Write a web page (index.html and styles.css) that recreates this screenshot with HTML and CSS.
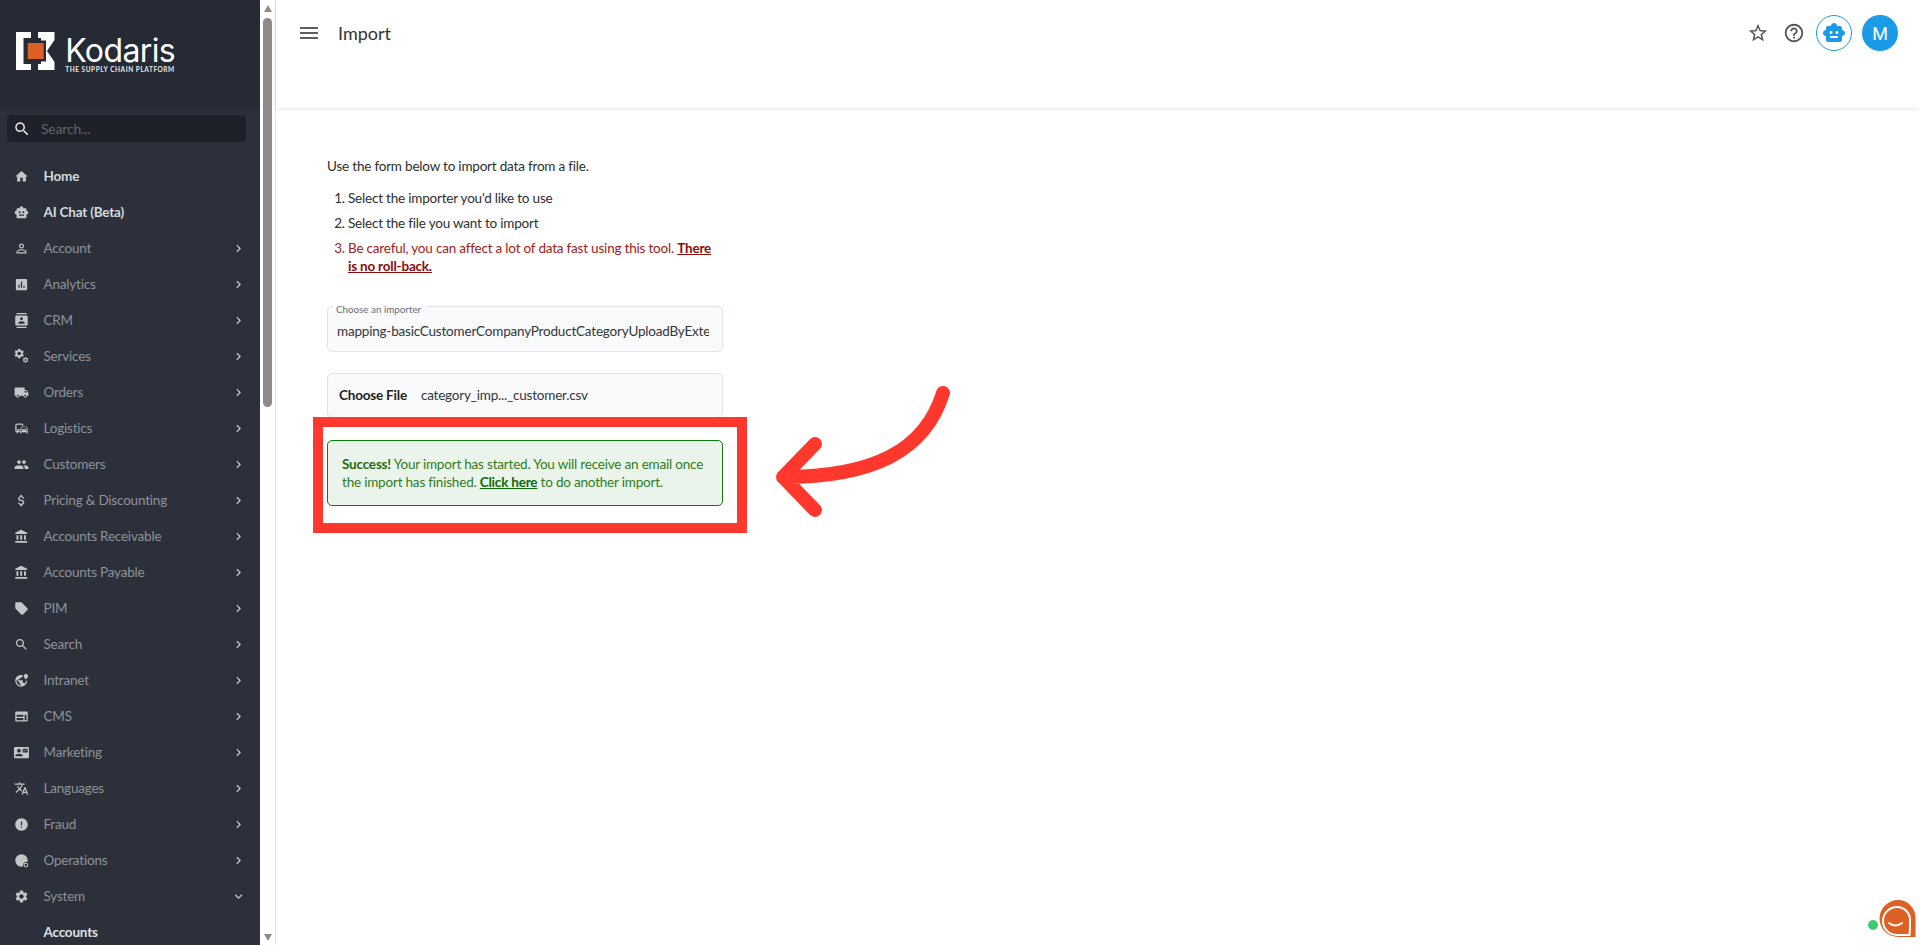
FILE: index.html
```html
<!DOCTYPE html>
<html lang="en">
<head>
<meta charset="utf-8">
<title>Import</title>
<link rel="stylesheet" href="styles.css">
</head>
<body>
<svg class="sprite" xmlns="http://www.w3.org/2000/svg">
<symbol id="i-home" viewBox="0 0 24 24"><path d="M10 20v-6h4v6h5v-8h3L12 3 2 12h3v8z"/></symbol>
<symbol id="i-bot" viewBox="0 0 24 24"><path d="M20 9V7c0-1.1-.9-2-2-2h-3c0-1.66-1.34-3-3-3S9 3.34 9 5H6c-1.1 0-2 .9-2 2v2c-1.66 0-3 1.34-3 3s1.34 3 3 3v4c0 1.1.9 2 2 2h12c1.1 0 2-.9 2-2v-4c1.66 0 3-1.34 3-3s-1.34-3-3-3zM7.5 11.5c0-.83.67-1.5 1.5-1.5s1.5.67 1.5 1.5S9.83 13 9 13s-1.5-.67-1.5-1.5zM16 17H8v-2h8v2zm-1-4c-.83 0-1.5-.67-1.5-1.5S14.17 10 15 10s1.5.67 1.5 1.5S15.83 13 15 13z"/></symbol>
<symbol id="i-person" viewBox="0 0 24 24"><path d="M12 5.9c1.16 0 2.1.94 2.1 2.1s-.94 2.1-2.1 2.1S9.9 9.16 9.9 8s.94-2.1 2.1-2.1m0 9c2.97 0 6.1 1.46 6.1 2.1v1.1H5.9V17c0-.64 3.13-2.1 6.1-2.1M12 4C9.79 4 8 5.79 8 8s1.79 4 4 4 4-1.79 4-4-1.79-4-4-4zm0 9c-2.67 0-8 1.34-8 4v3h16v-3c0-2.66-5.33-4-8-4z"/></symbol>
<symbol id="i-analytics" viewBox="0 0 24 24"><path d="M19 3H5c-1.1 0-2 .9-2 2v14c0 1.1.9 2 2 2h14c1.1 0 2-.9 2-2V5c0-1.1-.9-2-2-2zM9 17H7v-5h2v5zm4 0h-2V7h2v10zm4 0h-2v-3h2v3z"/></symbol>
<symbol id="i-contacts" viewBox="0 0 24 24"><path d="M20 0H4v2h16V0zM4 24h16v-2H4v2zM20 4H4c-1.1 0-2 .9-2 2v12c0 1.1.9 2 2 2h16c1.1 0 2-.9 2-2V6c0-1.1-.9-2-2-2zm-8 2.75c1.24 0 2.25 1.01 2.25 2.25s-1.01 2.25-2.25 2.25S9.75 10.24 9.75 9 10.76 6.75 12 6.75zM17 17H7v-1.5c0-1.67 3.33-2.5 5-2.5s5 .83 5 2.5V17z"/></symbol>
<symbol id="i-gear" viewBox="0 0 24 24"><path d="M19.14 12.94c.04-.3.06-.61.06-.94 0-.32-.02-.64-.07-.94l2.03-1.58c.18-.14.23-.41.12-.61l-1.92-3.32c-.12-.22-.37-.29-.59-.22l-2.39.96c-.5-.38-1.03-.7-1.62-.94l-.36-2.54c-.04-.24-.24-.41-.48-.41h-3.84c-.24 0-.43.17-.47.41l-.36 2.54c-.59.24-1.13.57-1.62.94l-2.39-.96c-.22-.08-.47 0-.59.22L2.74 8.87c-.12.21-.08.47.12.61l2.03 1.58c-.05.3-.09.63-.09.94s.02.64.07.94l-2.03 1.58c-.18.14-.23.41-.12.61l1.92 3.32c.12.22.37.29.59.22l2.39-.96c.5.38 1.03.7 1.62.94l.36 2.54c.05.24.24.41.48.41h3.84c.24 0 .44-.17.47-.41l.36-2.54c.59-.24 1.13-.56 1.62-.94l2.39.96c.22.08.47 0 .59-.22l1.92-3.32c.12-.22.07-.47-.12-.61l-2.01-1.58zM12 15.6c-1.98 0-3.6-1.62-3.6-3.6s1.62-3.6 3.6-3.6 3.6 1.62 3.6 3.6-1.62 3.6-3.6 3.6z"/></symbol>
<symbol id="i-gears" viewBox="0 0 24 24"><g transform="translate(-1 -2) scale(.78)"><use href="#i-gear-shape"/></g><g transform="translate(13 12) scale(.46)"><use href="#i-gear-shape"/></g></symbol>
<symbol id="i-gear-shape" viewBox="0 0 24 24" overflow="visible"><path d="M19.14 12.94c.04-.3.06-.61.06-.94 0-.32-.02-.64-.07-.94l2.03-1.58c.18-.14.23-.41.12-.61l-1.92-3.32c-.12-.22-.37-.29-.59-.22l-2.39.96c-.5-.38-1.03-.7-1.62-.94l-.36-2.54c-.04-.24-.24-.41-.48-.41h-3.84c-.24 0-.43.17-.47.41l-.36 2.54c-.59.24-1.13.57-1.62.94l-2.39-.96c-.22-.08-.47 0-.59.22L2.74 8.87c-.12.21-.08.47.12.61l2.03 1.58c-.05.3-.09.63-.09.94s.02.64.07.94l-2.03 1.58c-.18.14-.23.41-.12.61l1.92 3.32c.12.22.37.29.59.22l2.39-.96c.5.38 1.03.7 1.62.94l.36 2.54c.05.24.24.41.48.41h3.84c.24 0 .44-.17.47-.41l.36-2.54c.59-.24 1.13-.56 1.62-.94l2.39.96c.22.08.47 0 .59-.22l1.92-3.32c.12-.22.07-.47-.12-.61l-2.01-1.58zM12 15.6c-1.98 0-3.6-1.62-3.6-3.6s1.62-3.6 3.6-3.6 3.6 1.62 3.6 3.6-1.62 3.6-3.6 3.6z"/></symbol>
<symbol id="i-truck" viewBox="0 0 24 24"><path d="M20 8h-3V4H3c-1.1 0-2 .9-2 2v11h2c0 1.66 1.34 3 3 3s3-1.34 3-3h6c0 1.66 1.34 3 3 3s3-1.34 3-3h2v-5l-3-4zM6 18.5c-.83 0-1.5-.67-1.5-1.5s.67-1.5 1.5-1.5 1.5.67 1.5 1.5-.67 1.5-1.5 1.5zm13.5-9l1.96 2.5H17V9.5h2.5zm-1.5 9c-.83 0-1.5-.67-1.5-1.5s.67-1.5 1.5-1.5 1.5.67 1.5 1.5-.67 1.5-1.5 1.5z"/></symbol>
<symbol id="i-commute" viewBox="0 0 24 24"><path d="M12 4H5C3.34 4 2 5.34 2 7v8c0 1.66 1.34 3 3 3l-1 1v1h1l2-2.03L9 18v-5H4V5.98L13 6v2h2V7c0-1.66-1.34-3-3-3zM5 14c.55 0 1 .45 1 1s-.45 1-1 1-1-.45-1-1 .45-1 1-1zm15.57-4.34c-.14-.4-.52-.66-.97-.66h-7.19c-.46 0-.83.26-.98.66L10 13.77l.01 5.51c0 .38.31.72.69.72h.62c.38 0 .68-.38.68-.76V18h8v1.24c0 .38.31.76.69.76h.61c.38 0 .69-.34.69-.72l.01-1.37v-4.14l-1.43-4.07zm-8.16.34h7.19l1.03 3h-9.25l1.03-3zM12 16c-.55 0-1-.45-1-1s.45-1 1-1 1 .45 1 1-.45 1-1 1zm8 0c-.55 0-1-.45-1-1s.45-1 1-1 1 .45 1 1-.45 1-1 1z"/></symbol>
<symbol id="i-people" viewBox="0 0 24 24"><path d="M16 11c1.66 0 2.99-1.34 2.99-3S17.66 5 16 5c-1.66 0-3 1.34-3 3s1.34 3 3 3zm-8 0c1.66 0 2.99-1.34 2.99-3S9.66 5 8 5C6.34 5 5 6.34 5 8s1.34 3 3 3zm0 2c-2.33 0-7 1.17-7 3.5V19h14v-2.5c0-2.33-4.67-3.5-7-3.5zm8 0c-.29 0-.62.02-.97.05 1.16.84 1.97 1.97 1.97 3.45V19h6v-2.5c0-2.33-4.67-3.5-7-3.5z"/></symbol>
<symbol id="i-money" viewBox="0 0 24 24"><path d="M11.8 10.9c-2.27-.59-3-1.2-3-2.15 0-1.09 1.01-1.85 2.7-1.85 1.78 0 2.44.85 2.5 2.1h2.21c-.07-1.72-1.12-3.3-3.21-3.81V3h-3v2.16c-1.94.42-3.5 1.68-3.5 3.61 0 2.31 1.91 3.46 4.7 4.13 2.5.6 3 1.48 3 2.41 0 .69-.49 1.79-2.7 1.79-2.06 0-2.87-.92-2.98-2.1h-2.2c.12 2.19 1.76 3.42 3.68 3.83V21h3v-2.15c1.95-.37 3.5-1.5 3.5-3.55 0-2.84-2.43-3.81-4.7-4.4z"/></symbol>
<symbol id="i-bank" viewBox="0 0 24 24"><path d="M4 10v7h3v-7H4zm6 0v7h3v-7h-3zM2 22h19v-3H2v3zm14-12v7h3v-7h-3zm-4.5-9L2 6v2h19V6l-9.500-5z"/></symbol>
<symbol id="i-tag" viewBox="0 0 24 24"><path d="M21.41 11.58l-9-9C12.05 2.22 11.55 2 11 2H4c-1.1 0-2 .9-2 2v7c0 .55.22 1.05.59 1.42l9 9c.36.36.86.58 1.41.58.55 0 1.05-.22 1.41-.59l7-7c.37-.36.59-.86.59-1.41 0-.55-.23-1.06-.59-1.42z"/></symbol>
<symbol id="i-search" viewBox="0 0 24 24"><path d="M15.5 14h-.79l-.28-.27C15.41 12.59 16 11.11 16 9.5 16 5.91 13.09 3 9.5 3S3 5.91 3 9.5 5.91 16 9.5 16c1.61 0 3.09-.59 4.23-1.57l.27.28v.79l5 4.99L20.49 19l-4.99-5zm-6 0C7.01 14 5 11.99 5 9.5S7.01 5 9.5 5 14 7.01 14 9.5 11.99 14 9.5 14z"/></symbol>
<symbol id="i-globe" viewBox="0 0 24 24"><path d="M11 3C6.03 3 2 7.03 2 12s4.03 10 9 10 10-4.03 10-9.5h-2c0 2-1 3.5-2 4.5-.3-.8-1-1.4-2-1.4h-1v-3c0-.5-.4-1-1-1H7v-2h2c.5 0 1-.4 1-1V7h2c.8 0 1.5-.5 1.8-1.2V3.4C13 3.100 12 3 11 3zM10 19.800C6.500 19.300 4 16 4 12c0-.6.100-1.200.2-1.800L9 15v1c0 1.100.9 2 2 2v1.800z"/><path d="M19 1.500c-2 0-3.500 1.500-3.500 3.400 0 2.500 3.500 5.600 3.500 5.600s3.500-3.100 3.500-5.600c0-1.900-1.500-3.400-3.500-3.400z"/></symbol>
<symbol id="i-web" viewBox="0 0 24 24"><path d="M20 4H4c-1.100 0-2 .9-2 2v12c0 1.100.9 2 2 2h16c1.100 0 2-.9 2-2V6c0-1.100-.9-2-2-2zM4 9h11v3.500H4V9zm0 5.500h11V18H4v-3.500zM20 18h-3V9h3v9z"/></symbol>
<symbol id="i-contact" viewBox="0 0 24 24"><path d="M21 8V7l-3 2-3-2v1l3 2 3-2zm1-5H2C.9 3 0 3.900 0 5v14c0 1.100.9 2 2 2h20c1.100 0 1.990-.9 1.990-2L24 5c0-1.100-.9-2-2-2zM8 6c1.660 0 3 1.340 3 3s-1.340 3-3 3-3-1.340-3-3 1.340-3 3-3zm6 12H2v-1c0-2 4-3.100 6-3.100s6 1.100 6 3.100v1zm8-6h-8V6h8v6z"/></symbol>
<symbol id="i-translate" viewBox="0 0 24 24"><path d="M12.870 15.070l-2.540-2.510.03-.03c1.740-1.940 2.980-4.170 3.710-6.530H17V4h-7V2H8v2H1v1.990h11.170C11.500 7.920 10.440 9.750 9 11.350 8.070 10.320 7.300 9.190 6.690 8h-2c.73 1.630 1.730 3.170 2.980 4.560l-5.090 5.020L4 19l5-5 3.110 3.110.76-2.040zM18.500 10h-2L12 22h2l1.120-3h4.750L21 22h2l-4.500-12zm-2.620 7l1.620-4.330L19.120 17h-3.240z"/></symbol>
<symbol id="i-error" viewBox="0 0 24 24"><path d="M12 2C6.480 2 2 6.480 2 12s4.480 10 10 10 10-4.480 10-10S17.520 2 12 2zm1 15h-2v-2h2v2zm0-4h-2V7h2v6z"/></symbol>
<symbol id="i-ops" viewBox="0 0 24 24"><path d="M12 2a10 10 0 0 0 0 20c.8 0 1.500-.1 2.200-.3A6.500 6.500 0 0 1 21.700 14c.2-.6.3-1.300.3-2A10 10 0 0 0 12 2z"/><path d="M19 15.500a3.800 3.800 0 1 0 0 7.600 3.800 3.800 0 0 0 0-7.600zm0 1.700a2.100 2.100 0 1 1 0 4.200 2.100 2.100 0 0 1 0-4.200z"/></symbol>
<symbol id="i-right" viewBox="0 0 24 24"><path d="M10 6L8.590 7.410 13.170 12l-4.580 4.590L10 18l6-6z"/></symbol>
<symbol id="i-down" viewBox="0 0 24 24"><path d="M16.590 8.590L12 13.170 7.410 8.590 6 10l6 6 6-6z"/></symbol>
</svg>

<div class="app">
  <aside class="sidebar">
    <div class="brand">
      <svg class="brand-mark" viewBox="0 0 39 39">
        <path class="mark-white" d="M0 0H15V6H7.500V32H15V38H0z"/>
        <path class="mark-white" d="M22 0H38.500V8L31 19L38.500 30V38H22V32H25V6H22z"/>
        <rect class="mark-dark" x="9" y="8.500" width="21" height="21"/>
        <rect class="mark-orange" x="11.700" y="11" width="16" height="16"/>
      </svg>
      <div class="brand-text">
        <span class="brand-name">Kodaris</span>
        <span class="brand-sub">THE SUPPLY CHAIN PLATFORM</span>
      </div>
    </div>
    <div class="side-search">
      <svg class="side-search-icon"><use href="#i-search"/></svg>
      <span class="side-search-ph">Search...</span>
    </div>
    <nav class="nav">
      <a class="nav-item lit"><svg class="nav-icon"><use href="#i-home"/></svg><span class="nav-label">Home</span></a>
      <a class="nav-item lit"><svg class="nav-icon"><use href="#i-bot"/></svg><span class="nav-label">AI Chat (Beta)</span></a>
      <a class="nav-item"><svg class="nav-icon"><use href="#i-person"/></svg><span class="nav-label">Account</span><svg class="nav-chev"><use href="#i-right"/></svg></a>
      <a class="nav-item"><svg class="nav-icon"><use href="#i-analytics"/></svg><span class="nav-label">Analytics</span><svg class="nav-chev"><use href="#i-right"/></svg></a>
      <a class="nav-item"><svg class="nav-icon"><use href="#i-contacts"/></svg><span class="nav-label">CRM</span><svg class="nav-chev"><use href="#i-right"/></svg></a>
      <a class="nav-item"><svg class="nav-icon"><use href="#i-gears"/></svg><span class="nav-label">Services</span><svg class="nav-chev"><use href="#i-right"/></svg></a>
      <a class="nav-item"><svg class="nav-icon"><use href="#i-truck"/></svg><span class="nav-label">Orders</span><svg class="nav-chev"><use href="#i-right"/></svg></a>
      <a class="nav-item"><svg class="nav-icon"><use href="#i-commute"/></svg><span class="nav-label">Logistics</span><svg class="nav-chev"><use href="#i-right"/></svg></a>
      <a class="nav-item"><svg class="nav-icon"><use href="#i-people"/></svg><span class="nav-label">Customers</span><svg class="nav-chev"><use href="#i-right"/></svg></a>
      <a class="nav-item"><svg class="nav-icon"><use href="#i-money"/></svg><span class="nav-label">Pricing &amp; Discounting</span><svg class="nav-chev"><use href="#i-right"/></svg></a>
      <a class="nav-item"><svg class="nav-icon"><use href="#i-bank"/></svg><span class="nav-label">Accounts Receivable</span><svg class="nav-chev"><use href="#i-right"/></svg></a>
      <a class="nav-item"><svg class="nav-icon"><use href="#i-bank"/></svg><span class="nav-label">Accounts Payable</span><svg class="nav-chev"><use href="#i-right"/></svg></a>
      <a class="nav-item"><svg class="nav-icon"><use href="#i-tag"/></svg><span class="nav-label">PIM</span><svg class="nav-chev"><use href="#i-right"/></svg></a>
      <a class="nav-item"><svg class="nav-icon"><use href="#i-search"/></svg><span class="nav-label">Search</span><svg class="nav-chev"><use href="#i-right"/></svg></a>
      <a class="nav-item"><svg class="nav-icon"><use href="#i-globe"/></svg><span class="nav-label">Intranet</span><svg class="nav-chev"><use href="#i-right"/></svg></a>
      <a class="nav-item"><svg class="nav-icon"><use href="#i-web"/></svg><span class="nav-label">CMS</span><svg class="nav-chev"><use href="#i-right"/></svg></a>
      <a class="nav-item"><svg class="nav-icon"><use href="#i-contact"/></svg><span class="nav-label">Marketing</span><svg class="nav-chev"><use href="#i-right"/></svg></a>
      <a class="nav-item"><svg class="nav-icon"><use href="#i-translate"/></svg><span class="nav-label">Languages</span><svg class="nav-chev"><use href="#i-right"/></svg></a>
      <a class="nav-item"><svg class="nav-icon"><use href="#i-error"/></svg><span class="nav-label">Fraud</span><svg class="nav-chev"><use href="#i-right"/></svg></a>
      <a class="nav-item"><svg class="nav-icon"><use href="#i-ops"/></svg><span class="nav-label">Operations</span><svg class="nav-chev"><use href="#i-right"/></svg></a>
      <a class="nav-item"><svg class="nav-icon"><use href="#i-gear"/></svg><span class="nav-label">System</span><svg class="nav-chev"><use href="#i-down"/></svg></a>
      <a class="nav-item sub"><span class="nav-label">Accounts</span></a>
    </nav>
  </aside>

  <div class="fake-scroll">
    <span class="arrow-up"></span>
    <span class="thumb"></span>
    <span class="arrow-down"></span>
  </div>

  <main class="main">
    <header class="topbar">
      <div class="topbar-row">
        <svg class="menu-icon" viewBox="0 0 24 24"><path d="M3 18h18v-2H3v2zm0-5h18v-2H3v2zm0-7v2h18V6H3z"/></svg>
        <h1 class="title">Import</h1>
        <div class="top-actions">
          <svg class="top-icon" viewBox="0 0 24 24"><path d="M22 9.240l-7.190-.62L12 2 9.190 8.630 2 9.240l5.460 4.730L5.820 21 12 17.270 18.180 21l-1.630-7.030L22 9.240zM12 15.400l-3.760 2.270 1-4.280-3.320-2.880 4.380-.38L12 6.100l1.710 4.040 4.380.38-3.320 2.880 1 4.280L12 15.400z"/></svg>
          <svg class="top-icon" viewBox="0 0 24 24"><path d="M11 18h2v-2h-2v2zm1-16C6.480 2 2 6.480 2 12s4.480 10 10 10 10-4.480 10-10S17.520 2 12 2zm0 18c-4.410 0-8-3.590-8-8s3.590-8 8-8 8 3.590 8 8-3.590 8-8 8zm0-14c-2.210 0-4 1.790-4 4h2c0-1.100.9-2 2-2s2 .9 2 2c0 2-3 1.750-3 5h2c0-2.250 3-2.500 3-5 0-2.210-1.790-4-4-4z"/></svg>
          <span class="bot-btn"><svg class="bot-icon"><use href="#i-bot"/></svg></span>
          <span class="avatar">M</span>
        </div>
      </div>
    </header>

    <section class="content">
      <p class="intro">Use the form below to import data from a file.</p>
      <ol class="steps">
        <li>Select the importer you'd like to use</li>
        <li>Select the file you want to import</li>
        <li class="warn">Be careful, you can affect a lot of data fast using this tool. <strong>There is no roll-back.</strong></li>
      </ol>
      <div class="field">
        <span class="field-legend">Choose an importer</span>
        <div class="field-value">mapping-basicCustomerCompanyProductCategoryUploadByExternalIdentifier</div>
      </div>
      <div class="file-box">
        <span class="file-btn">Choose File</span>
        <span class="file-name">category_imp..._customer.csv</span>
      </div>
      <div class="success"><strong>Success!</strong> Your import has started. You will receive an email once the import has finished. <a class="success-link">Click here</a> to do another import.</div>
    </section>

    <div class="callout-box"></div>
    <svg class="callout-arrow" viewBox="0 0 200 160">
      <path d="M175 12C157 70 105 96 15 96M47 63L15 96L47 129"/>
    </svg>
  </main>
</div>

<svg class="chat-widget" viewBox="0 0 52 45">
  <path class="chat-blob" d="M33 3a17.500 17.500 0 0 1 17.500 17.500V40H33a18.500 18.500 0 0 1 0-37z"/>
  <path class="chat-line" d="M32 10a13 13 0 0 1 13 13c0 5 0 10-.5 15H32a14 14 0 0 1 0-28z"/>
  <path class="chat-line" d="M24 26c4 3 9 3 13 0"/>
  <circle class="chat-dot" cx="8" cy="28" r="6"/>
</svg>
</body>
</html>
```

FILE: styles.css
```css
* { box-sizing: border-box; }
html, body { margin: 0; height: 100%; overflow: hidden; }
body { font-family: "Lato", "Noto Sans", sans-serif; font-size: 13.5px; letter-spacing: -.2px; color: #2b2b2b; background: #fff; }
.sprite { position: absolute; width: 0; height: 0; overflow: hidden; }

.app { display: flex; height: 945px; }

.sidebar { width: 260px; flex: none; background: #2b303b; overflow: hidden; display: flex; flex-direction: column; }
.brand { height: 108px; flex: none; background: #252a35; display: flex; align-items: flex-start; padding: 32px 0 0 15.700px; gap: 10.500px; }
.brand-mark { width: 39px; height: 39px; flex: none; }
.mark-white { fill: #fff; }
.mark-dark { fill: #252a35; }
.mark-orange { fill: #dd6125; }
.brand-text { display: flex; flex-direction: column; width: 112px; }
.brand-name { font-family: "Inter", sans-serif; font-size: 32px; line-height: 31px; letter-spacing: -.6px; color: #fff; margin-top: 3px; font-weight: 400; }
.brand-sub { font-size: 6.500px; line-height: 7px; font-weight: 700; letter-spacing: .55px; color: #e8e8e8; white-space: nowrap; }

.side-search { margin: 7px 14px 0 7px; height: 27px; flex: none; background: #1e2129; border-radius: 4px; display: flex; align-items: center; padding-left: 6px; }
.side-search-icon { width: 18px; height: 18px; fill: #e3e5e8; flex: none; }
.side-search-ph { margin-left: 10px; color: #5f636b; font-size: 14px; }

.nav { padding-top: 16px; flex: none; }
.nav-item { display: flex; align-items: center; height: 36px; padding: 0 14px 0 14px; color: #8e9299; }
.nav-icon { width: 15px; height: 15px; flex: none; fill: #c4c6ca; }
.nav-label { margin-left: 14.500px; flex: 1; white-space: nowrap; }
.nav-chev { width: 15px; height: 15px; flex: none; fill: #c4c6ca; }
.nav-item.lit { color: #d6d9dd; font-weight: 700; }
.nav-item.sub { padding-left: 43.500px; color: #dfe1e4; font-weight: 700; }
.nav-item.sub .nav-label { margin-left: 0; }

.fake-scroll { width: 16px; flex: none; border-right: 1px solid #e3e3e3; padding: 0 3px; display: flex; flex-direction: column; align-items: center; background: #fff; }
.arrow-up { margin-top: 5px; border-left: 4.500px solid transparent; border-right: 4.500px solid transparent; border-bottom: 7px solid #8b8b8b; }
.thumb { width: 9px; height: 389px; margin-top: 6px; border-radius: 5px; background: #8b8b8b; }
.arrow-down { margin-top: auto; margin-bottom: 4px; border-left: 4.500px solid transparent; border-right: 4.500px solid transparent; border-top: 7px solid #8b8b8b; }

.main { flex: 1; position: relative; min-width: 0; }
.topbar { height: 108px; background: #fff; box-shadow: 0 1px 4px rgba(0,0,0,.1); padding: 14px 22px 0 21px; }
.topbar-row { display: flex; align-items: center; height: 38px; }
.menu-icon { width: 24px; height: 24px; fill: #5f5f5f; flex: none; }
.title { margin: 0 0 0 17px; font-size: 18px; letter-spacing: 0; font-weight: 400; color: #333; flex: 1; }
.top-actions { display: flex; align-items: center; }
.top-icon { width: 22px; height: 22px; fill: #555; margin-right: 14px; flex: none; }
.bot-btn { width: 36px; height: 36px; border-radius: 50%; border: 1px solid #1a9be6; display: flex; align-items: center; justify-content: center; margin: 0 10px 0 -3px; }
.bot-icon { width: 24px; height: 24px; fill: #1a9be6; }
.avatar { width: 36px; height: 36px; border-radius: 50%; background: #1a9be6; color: #fff; display: flex; align-items: center; justify-content: center; font-family: "Roboto", sans-serif; font-size: 18px; letter-spacing: 0; }

.content { width: 447px; padding: 49px 0 0 51px; }
.intro { margin: 0; line-height: 18px; color: #2e2e2e; }
.steps { margin: 14px 0 0; padding: 0 0 0 21px; line-height: 18px; color: #2e2e2e; }
.steps li { margin-bottom: 7px; }
.steps .warn { color: #a32020; margin-bottom: 0; }
.steps strong { color: #8f0a0a; text-decoration: underline; }

.field { position: relative; margin-top: 31px; padding: 17px 13px 0 9px; height: 46px; border: 1px solid #e0e3e8; border-radius: 5px; background: #f9fafc; }
.field-legend { position: absolute; left: 5px; top: -3px; padding: 0 5px 0 3px; font-size: 9.800px; letter-spacing: 0; line-height: 10px; color: #6c6f75; background: linear-gradient(#fff 3px, #f9fafc 3px); }
.field-value { line-height: 15px; height: 15px; overflow: hidden; white-space: nowrap; color: #33363a; }

.file-box { margin-top: 21px; height: 45px; border: 1px solid #e0e3e8; border-radius: 5px; background: #f9fafc; display: flex; align-items: center; padding: 0 0 2px 11px; }
.file-btn { font-weight: 700; color: #1f1f1f; }
.file-name { margin-left: 14px; color: #33363a; }

.success { margin-top: 22px; height: 66px; padding: 13.500px 13px 0 14px; border: 1px solid #0a7d0a; border-radius: 5px; background: #ebf4ea; color: #2f7d22; line-height: 18px; }
.success strong { color: #1f6b12; }
.success-link { color: #0a6b0a; font-weight: 700; text-decoration: underline; }

.callout-box { position: absolute; left: 37px; top: 417px; width: 434px; height: 116px; border: 10px solid #ff382d; }
.callout-arrow { position: absolute; left: 492px; top: 381px; width: 200px; height: 160px; overflow: visible; }
.callout-arrow path { fill: none; stroke: #ff382d; stroke-width: 14; stroke-linecap: round; stroke-linejoin: round; }

.chat-widget { position: absolute; left: 1865px; top: 897px; width: 52px; height: 45px; overflow: visible; }
.chat-dot { fill: #3fc872; stroke: #fff; stroke-width: 2; }
.chat-blob { fill: #dd6125; }
.chat-line { fill: none; stroke: #fff; stroke-width: 2; stroke-linecap: round; }
```
